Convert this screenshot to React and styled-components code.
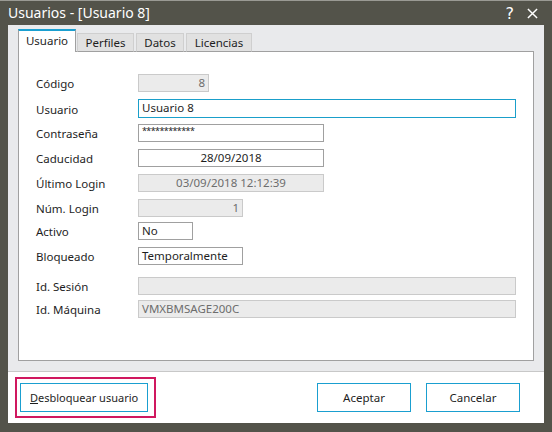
import styled, { createGlobalStyle } from "styled-components";

const GlobalStyles = createGlobalStyle`
  html, body { margin: 0; padding: 0; }
  body { font-family: "Noto Sans", "Open Sans", sans-serif; }
  * { box-sizing: border-box; }
`;

const fields = [
  { label: "Código", value: "8", width: 71, disabled: true, align: "right" },
  { label: "Usuario", value: "Usuario 8", width: 378, focus: true, gap: 26 },
  { label: "Contraseña", value: "************", width: 186, gap: 24, secret: true },
  { label: "Caducidad", value: "28/09/2018", width: 186, align: "center", gap: 25 },
  { label: "Último Login", value: "03/09/2018 12:12:39", width: 186, disabled: true, align: "center", gap: 25 },
  { label: "Núm. Login", value: "1", width: 105, disabled: true, align: "right", gap: 25 },
  { label: "Activo", value: "No", width: 55, gap: 23 },
  { label: "Bloqueado", value: "Temporalmente", width: 105, gap: 25 },
  { label: "Id. Sesión", value: "", width: 378, disabled: true, gap: 30 },
  { label: "Id. Máquina", value: "VMXBMSAGE200C", width: 378, disabled: true, align: "left", gap: 23 },
];

const tabs = [
  { name: "Usuario", width: 58 },
  { name: "Perfiles", width: 57 },
  { name: "Datos", width: 48 },
  { name: "Licencias", width: 66 },
];

function App() {
  return (
    <Window>
      <GlobalStyles />
      <TitleBar>
        <Title>Usuarios - [Usuario 8]</Title>
        <TitleButtons>
          <span>?</span>
          <CloseIcon viewBox="0 0 12 12">
            <path d="M1 1 L11 11 M11 1 L1 11" stroke="#fff" strokeWidth="1.6" />
          </CloseIcon>
        </TitleButtons>
      </TitleBar>
      <Body>
        <TabArea>
          <TabStrip>
            {tabs.map((t, i) => (
              <Tab key={t.name} $active={i === 0} $width={t.width}>
                {t.name}
              </Tab>
            ))}
          </TabStrip>
          <Panel>
            {fields.map((f, i) => (
              <Row key={f.label} $gap={i === 0 ? 0 : f.gap - 19}>
                <Label>{f.label}</Label>
                <Field
                  $width={f.width}
                  $disabled={f.disabled}
                  $focus={f.focus}
                  $align={f.align}
                  $secret={f.secret}
                >
                  {f.value}
                </Field>
              </Row>
            ))}
          </Panel>
        </TabArea>
        <ButtonBar>
          <Highlight>
            <Button $wide>
              <span>
                <u>D</u>esbloquear usuario
              </span>
            </Button>
          </Highlight>
          <RightButtons>
            <Button>Aceptar</Button>
            <Button>Cancelar</Button>
          </RightButtons>
        </ButtonBar>
      </Body>
    </Window>
  );
}

const Window = styled.div`
  width: 552px;
  height: 432px;
  background: #53534a;
  border-top: 1px solid #9a9a94;
  padding: 0 8px 9px 8px;
  display: flex;
  flex-direction: column;
`;

const TitleBar = styled.div`
  height: 24px;
  display: flex;
  align-items: center;
  justify-content: space-between;
  color: #fff;
`;

const Title = styled.div`
  font-size: 14px;
  margin-top: -1px;
`;

const TitleButtons = styled.div`
  display: flex;
  align-items: center;
  gap: 13px;
  margin-right: 6px;
  font-size: 16px;
  font-family: "DejaVu Sans", sans-serif;
`;

const CloseIcon = styled.svg`
  width: 11px;
  height: 11px;
`;

const Body = styled.div`
  flex: 1;
  background: #e9eaec;
  display: flex;
  flex-direction: column;
`;

const TabArea = styled.div`
  flex: 1;
  display: flex;
  flex-direction: column;
  padding: 5px 10px 10px 10px;
`;

const TabStrip = styled.div`
  display: flex;
  align-items: flex-end;
  height: 22px;
  position: relative;
  z-index: 1;
  margin-bottom: -1px;
`;

const Tab = styled.div`
  font-size: 11.5px;
  color: #1e1e1e;
  width: ${({ $width }) => $width}px;
  display: flex;
  align-items: center;
  justify-content: center;
  ${({ $active }) =>
    $active
      ? `
    height: 23px;
    background: #fff;
    border-top: 2px solid #1a9fd0;
    border-left: 1px solid #a0a0a0;
    border-right: 1px solid #a0a0a0;
    padding-bottom: 3px;
  `
      : `
    height: 19px;
    background: #e1e1e1;
    border: 1px solid #cfcfcf;
    border-bottom: 1px solid #a0a0a0;
    margin-left: 1px;
    margin-right: 1px;
  `}
`;

const Panel = styled.div`
  flex: 1;
  background: #fff;
  border: 1px solid #a0a0a0;
  padding: 21px 0 0 17px;
  display: flex;
  flex-direction: column;
`;

const Row = styled.div`
  display: flex;
  align-items: center;
  margin-top: ${({ $gap }) => $gap}px;
  height: 19px;
`;

const Label = styled.div`
  width: 102px;
  font-size: 11.5px;
  color: #1e1e1e;
  margin-top: 1px;
`;

const Field = styled.div`
  width: ${({ $width }) => $width}px;
  height: ${({ $focus }) => ($focus ? 19 : 18)}px;
  font-size: ${({ $secret }) => ($secret ? "9px" : "11.5px")};
  line-height: ${({ $secret }) => ($secret ? "11px" : "16px")};
  letter-spacing: ${({ $secret }) => ($secret ? "-0.6px" : "0")};
  padding: 0 3px;
  white-space: nowrap;
  overflow: hidden;
  text-align: ${({ $align }) => $align || "left"};
  color: ${({ $disabled }) => ($disabled ? "#6d6d6d" : "#1e1e1e")};
  background: ${({ $disabled }) => ($disabled ? "#ebebeb" : "#fff")};
  border: 1px solid
    ${({ $disabled, $focus }) =>
      $focus ? "#1a9fca" : $disabled ? "#cacaca" : "#a0a0a0"};
`;

const ButtonBar = styled.div`
  height: 52px;
  background: #fff;
  border-top: 1px solid #c8c8c8;
  display: flex;
  align-items: center;
  justify-content: space-between;
  padding: 0 24px 0 7px;
`;

const Highlight = styled.div`
  flex: none;
  width: 141px;
  border: 2px solid #d0185f;
  padding: 4px 6px 4px 3px;
`;

const RightButtons = styled.div`
  display: flex;
  gap: 15px;
`;

const Button = styled.div`
  flex: none;
  width: ${({ $wide }) => ($wide ? 128 : 94)}px;
  height: 29px;
  border: 1px solid #1a9fd0;
  background: #fff;
  font-size: ${({ $wide }) => ($wide ? "11px" : "11.5px")};
  color: #1e1e1e;
  white-space: nowrap;
  overflow: hidden;
  display: flex;
  align-items: center;
  justify-content: ${({ $wide }) => ($wide ? "flex-start" : "center")};
  padding-left: ${({ $wide }) => ($wide ? 9 : 0)}px;
  u { text-decoration: underline; }
`;

export default App;
